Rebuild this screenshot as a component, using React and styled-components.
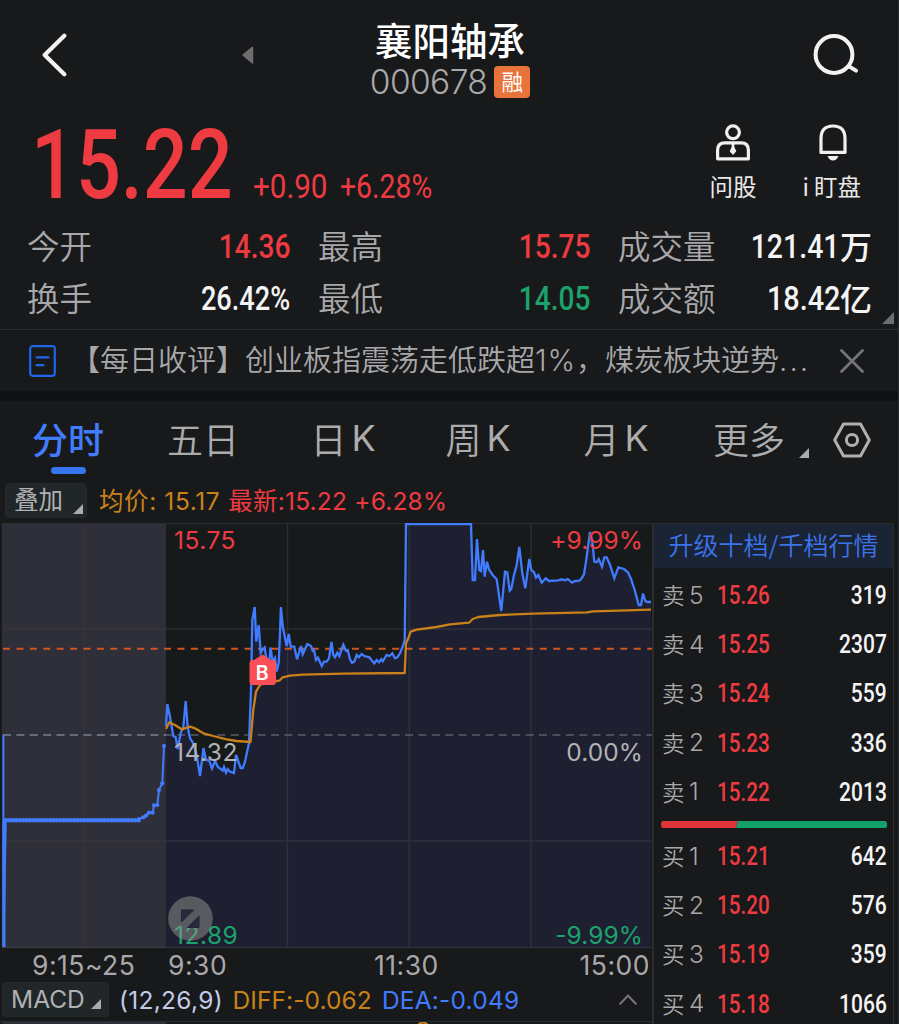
import React from "react";
import styled, { createGlobalStyle } from "styled-components";

const c = {
  bg: "#18191b",
  red: "#ee3b41",
  green: "#1ca36c",
  blue: "#417cff",
  orange: "#c98219",
  label: "#a8a8aa",
  white: "#f4f4f5",
  line: "#2b2c2f",
};

const sans = `Inter, "Noto Sans CJK SC", sans-serif`;
const cjk = `"Noto Sans CJK SC", sans-serif`;

const GlobalStyle = createGlobalStyle`
  body { margin: 0; background: ${c.bg}; }
  * { box-sizing: border-box; }
`;

const Screen = styled.div`
  width: 899px;
  height: 1024px;
  overflow: hidden;
  display: flex;
  flex-direction: column;
  background: ${c.bg};
  border-right: 1px solid #2a2b2e;
  color: ${c.white};
  font-family: ${sans};
  white-space: nowrap;
`;

const Header = styled.header`
  height: 112px;
  flex: none;
  display: grid;
  grid-template-columns: 370px 160px 1fr;
`;

const HeaderLeft = styled.div`
  display: flex;
  justify-content: space-between;
  padding: 33px 116px 0 41px;
`;

const HeaderRight = styled.div`
  display: flex;
  justify-content: flex-end;
  padding: 33px 39px 0 0;
`;

const TitleBlock = styled.div`
  display: flex;
  flex-direction: column;
  align-items: center;
  padding-top: 18px;
`;

const StockName = styled.h1`
  margin: 0;
  font: 500 37.5px/41px ${cjk};
  color: #fff;
`;

const CodeRow = styled.div`
  display: flex;
  align-items: center;
  gap: 7px;
  height: 46px;
`;

const Code = styled.span`
  font-size: 33.5px;
  line-height: 36px;
  font-weight: 320;
  letter-spacing: -0.6px;
  color: #a9a9ab;
`;

const MarginTag = styled.span`
  width: 36px;
  height: 32px;
  border-radius: 4px;
  background: #e9743b;
  color: #fff;
  font: 400 21.5px/29px ${cjk};
  text-align: center;
`;

const Quote = styled.section`
  height: 109px;
  flex: none;
  display: flex;
  justify-content: space-between;
  padding: 0 37px 0 31px;
`;

const PriceGroup = styled.div`
  display: flex;
  align-items: baseline;
  height: 109px;
  line-height: 106px;
`;

const Num = styled.span`
  display: inline-block;
  font-family: Roboto, sans-serif;
  font-size: ${(p) => p.$size}px;
  font-weight: ${(p) => p.$weight || 500};
  color: ${(p) => p.$color || c.white};
  transform: scaleX(${(p) => p.$stretch || 0.84});
  transform-origin: ${(p) => p.$origin || "left"} center;
`;

const PriceSlot = styled.div`
  width: ${(p) => p.$w}px;
`;

const ChangeGroup = styled.div`
  display: flex;
  padding-top: 1px;
  line-height: 109px;
`;

const Actions = styled.div`
  display: flex;
  gap: 46px;
  padding-top: 11px;
`;

const Action = styled.div`
  display: flex;
  flex-direction: column;
  align-items: center;
  gap: 8px;
  font: 400 23.5px/34px ${cjk};
  color: #e8e8e9;
`;

const BellIcon = styled.svg`
  margin-left: 3px;
`;

const WatchLabel = styled.span`
  display: flex;
  gap: 5px;
`;

const Stats = styled.section`
  position: relative;
  height: 109px;
  flex: none;
  display: grid;
  grid-template-columns: 263px 272px 254px;
  grid-template-rows: 51.5px 51.5px;
  column-gap: 28px;
  padding-left: 27px;
  border-bottom: 1px solid ${c.line};
`;

const Stat = styled.div`
  display: flex;
  justify-content: space-between;
  align-items: center;
`;

const StatLabel = styled.span`
  margin-top: -3px;
  font: 350 32.5px/48px ${cjk};
  color: ${c.label};
`;

const StatValue = styled.span`
  display: flex;
  align-items: center;
`;

const Unit = styled.span`
  margin-top: -3px;
  font: 500 32px/48px ${cjk};
  color: ${c.white};
`;

const StatsCorner = styled.svg`
  position: absolute;
  right: 4px;
  bottom: 5px;
`;

const News = styled.section`
  height: 61px;
  flex: none;
  display: flex;
  align-items: center;
  padding: 0 34px 0 29px;
`;

const NewsText = styled.span`
  width: 741px;
  margin: -3px 28px 0 15px;
  font: 350 29px/48px ${cjk};
  color: ${c.label};
`;

const NewsLatin = styled.span`
  font-family: Inter, sans-serif;
  font-size: 29.5px;
  font-weight: 350;
  letter-spacing: ${(p) => p.$track || 0}px;
`;

const Band = styled.div`
  height: 10px;
  flex: none;
  background: #0f1214;
`;

const Tabs = styled.nav`
  height: 80px;
  flex: none;
  display: grid;
  grid-template-columns: 136px 134px 146px 124px 152px 1fr;
`;

const Tab = styled.div`
  display: flex;
  flex-direction: column;
  align-items: center;
  padding-top: 9px;
  font: ${(p) => (p.$active ? 500 : 350)} 36px/57px ${cjk};
  color: ${(p) => (p.$active ? c.blue : "#acacad")};
`;

const TabLabel = styled.span`
  display: flex;
  gap: 5px;
`;

const Latin = styled.span`
  font-family: Inter, sans-serif;
  font-weight: 400;
`;

const Underline = styled.i`
  width: 35px;
  height: 7px;
  border-radius: 4px;
  background: #3676f0;
`;

const MoreTab = styled.div`
  display: flex;
  align-items: flex-start;
  padding: 9px 0 0 21px;
  font: 350 36px/57px ${cjk};
  color: #acacad;
`;

const MoreArrow = styled.svg`
  margin: 38px 24px 0 14px;
`;

const HexIcon = styled.svg`
  margin-top: 12px;
`;

const Legend = styled.div`
  height: 42px;
  flex: none;
  display: flex;
  align-items: center;
  padding: 0 0 3px 5px;
  font-size: 24.5px;
  line-height: 34px;
`;

const Chip = styled.button`
  display: flex;
  align-items: center;
  justify-content: space-between;
  width: ${(p) => p.$w}px;
  height: 35px;
  margin: 0;
  padding: 0 ${(p) => p.$pr}px 0 8px;
  border: 1px solid #25292b;
  border-radius: 4px;
  background: #212628;
  color: #b0b1b2;
  font: 380 24.5px/33px ${sans};
`;

const ChipArrow = styled.svg`
  align-self: flex-end;
  margin-bottom: ${(p) => p.$mb}px;
`;

const LegendText = styled.span`
  margin-left: ${(p) => p.$ml}px;
  color: ${(p) => p.$color};
  letter-spacing: ${(p) => p.$track || 0}px;
  font-weight: 390;
`;

const Main = styled.main`
  flex: 1;
  min-height: 0;
  display: grid;
  grid-template-columns: 652px 242px;
`;

const ChartColumn = styled.div`
  display: flex;
  flex-direction: column;
`;

const ChartBox = styled.div`
  position: relative;
  height: 426px;
  flex: none;
`;

const Plot = styled.svg`
  display: block;
`;

const ChartLabel = styled.span`
  position: absolute;
  ${(p) => (p.$right ? "right: 9px" : "left: 174px")};
  top: ${(p) => p.$top}px;
  font-size: 24.5px;
  line-height: 30px;
  font-weight: 390;
  letter-spacing: ${(p) => (p.$right ? 0.1 : 0.5)}px;
  color: ${(p) => p.$color};
`;

const ExpandButton = styled.svg`
  position: absolute;
  left: 168px;
  top: 373px;
`;

const Axis = styled.div`
  display: grid;
  grid-template-columns: 168px 206px 1fr auto;
  height: 32px;
  padding-right: 2px;
  font-size: 26.5px;
  font-weight: 390;
  letter-spacing: 0.5px;
  line-height: 32px;
  color: ${c.label};
`;

const AxisFirst = styled.span`
  padding-left: 32px;
`;

const MacdRow = styled.div`
  display: flex;
  align-items: center;
  height: 41px;
  flex: none;
  padding: 0 15px 3px 2px;
  font-size: 24.5px;
  border-bottom: 1px solid ${c.line};
`;

const Collapse = styled.svg`
  margin-left: auto;
`;

const Book = styled.aside`
  border-left: 2px solid #2b2c2f;
  border-right: 1.5px solid #2b2c2f;
  border-top: 1px solid #2b2c2f;
`;

const Upgrade = styled.div`
  height: 44px;
  margin-bottom: 3px;
  background: #1b2435;
  color: #3b74ec;
  font: 350 25px/41px ${cjk};
  text-align: center;
`;

const Level = styled.div`
  display: grid;
  grid-template-columns: 27px 28px 1fr auto;
  align-items: center;
  height: 49.2px;
  padding: 0 6px 0 8px;
`;

const Side = styled.span`
  margin-top: -3px;
  font: 350 22.5px/40px ${cjk};
  color: ${c.label};
`;

const Rank = styled.span`
  margin-top: -2px;
  font-size: 24.5px;
  font-weight: 360;
  color: ${c.label};
`;

const Ratio = styled.svg`
  display: block;
  margin: 4px 0 4px 7px;
`;

const Corner = ({ mb }) => (
  <ChipArrow $mb={mb} width="10" height="10" viewBox="0 0 10 10">
    <path d="M10 0V10H0Z" fill="#a9abac" />
  </ChipArrow>
);

const sells = [
  [5, "15.26", "319"],
  [4, "15.25", "2307"],
  [3, "15.24", "559"],
  [2, "15.23", "336"],
  [1, "15.22", "2013"],
];
const buys = [
  [1, "15.21", "642"],
  [2, "15.20", "576"],
  [3, "15.19", "359"],
  [4, "15.18", "1066"],
];

const LevelRow = ({ side, row }) => (
  <Level>
    <Side>{side}</Side>
    <Rank>{row[0]}</Rank>
    <Num $size={25} $color={c.red} $stretch={0.825}>{row[1]}</Num>
    <Num $size={25} $origin="right" $stretch={0.84}>{row[2]}</Num>
  </Level>
);

const auction =
  "M3.4 735V947L5.8 820H138L139 819 143.3 817.3 146 815.7 149 812.7 152.7 812.7 154 805.3 157.3 805 159 790 162.3 783.3 164 746";
const auctionSteps = [
  [139, 819], [143.3, 817.3], [146, 815.7], [149, 812.7], [152.7, 812.7],
  [154, 805.3], [157.3, 805], [159, 790], [162.3, 783.3], [164, 746],
];

const priceLine =
  "166 726 167.3 704 170 717 173.3 736 175.7 737 177.7 749 180.7 733 183.3 727 185.7 701 187.7 727 190 738 193 743 196.7 755 200 776 203.5 748 206 760 209 760 212 768.5 215 761 218 767 222.7 770.7 224 767 226 772.7 227.7 769 230 771.7 234 773 236 755 240.7 768 242.7 768 245 761.7 249 743 251 690 252.3 620 254.7 607 256.3 641.7 258.7 625 260.7 653 262.7 649.5 264.7 647.5 266.7 662 268.7 667 270.5 647.5 272.7 662 275 658 276.7 671.5 278.7 663 280 633 280.9 607 282.7 626 286.7 646 288.7 634 290.7 646.7 294.3 646.7 297 659.3 301 646 302.7 654.3 307.3 644 311 646 312.7 650.7 314 650 316 660 318 657.7 321.7 666 324 661.7 326.7 661.7 329 658.3 331.5 642 333.3 655 335 657.3 337.3 652.7 339.3 656 343.3 644.7 346 650.7 347.7 650 350 659.3 352 662.7 354.3 661.7 356.7 655 358.7 657.3 361.7 654 364.3 656 366.7 656.7 369.3 657.3 372 660.7 374.3 663.3 376.7 660 379 662.3 381.3 659.3 382.7 661.3 386.7 655 389.3 656 392.3 653.3 395 658.3 397.3 657.3 400 653.3 403.3 645 404.7 640 406 524 471 524 472.7 580 475 580 477 539 479.3 570 481 571 483 550 484.7 576.7 487 561.7 489.3 570 492.7 575 496.7 579.3 501.3 611 505 571.7 507.3 572.3 509.7 590.7 511.3 589 514 575 516.7 565 519.3 547 522.3 573.3 525.3 588.3 529.3 559 531.3 570 534 572.3 536 577.7 538.3 575 541.7 582.7 545.7 578.3 549 581 558.3 580.3 561.7 579.3 565 580.3 567.7 579 572 582.7 575 581 579.3 580.7 581.7 578.3 584 574.3 586 561.7 590 532 592.7 545 594.3 561.7 596.7 562.3 598.7 559 602 566.7 604.3 557.3 606.7 557.3 610 565 614.3 578.3 618.3 567.3 624 569 628 572.3 631 579 634.7 590 638.7 605 641 605 643 593.5 645.3 601 647.3 602 651 602";

const averageLine =
  "166 729 169.3 722.3 175 725 181.7 729.3 190 726.7 195 728.3 203.3 733.3 213.3 736 226.7 739.3 236.7 741 250.5 742 253.3 710 256 691.7 260 685 268 682 276 681 279.3 680.7 282.7 677.3 290 675.7 303.3 674.7 343 673.7 404.7 673 406 643.3 408.3 638.3 410.7 631.7 416.7 629.7 436.7 627 450 624.3 469 622.7 472.7 619 478.3 617 500 615 533.3 613.7 586.7 612.3 593.3 611.3 651 609.7";

const IntradayChart = () => (
  <Plot width="652" height="426" viewBox="0 523 652 426" fill="none">
    <rect x="2.5" y="524" width="649" height="424" fill="#171a1a" />
    <rect x="2.5" y="524" width="163.5" height="424" fill="#2f2f39" />
    <polygon points={`166 948 ${priceLine} 651 948`} fill="#1e1f30" />
    <path d="M2 523.5H652M287.5 524V948M409.3 524V948M531 524V948M166 629H652M166 841H652M2 947.5H652" stroke="#5b5b60" strokeOpacity=".3" strokeWidth="1.5" />
    <path d="M84 524V948M2 629H166M2 841H166M2.5 524V948" stroke="#3a3a3a" strokeOpacity=".6" strokeWidth="1.3" />
    <path d="M3 735H166" stroke="#777b88" strokeOpacity=".8" strokeWidth="1.8" strokeDasharray="8 5.4" />
    <path d="M163.8 735H652" stroke="#777b88" strokeOpacity=".5" strokeWidth="1.8" strokeDasharray="8 5.4" />
    <path d="M3 648.8H652" stroke="#cf5522" strokeWidth="2" strokeDasharray="7 6.42" />
    <path d={auction} stroke={c.blue} strokeWidth="2" />
    <path d="M4 822V947" stroke={c.blue} strokeWidth="3" />
    <path d="M6 820.2H139" stroke={c.blue} strokeWidth="4.4" strokeLinecap="round" strokeDasharray="0.1 3.3" />
    {auctionSteps.map(([x, y]) => (
      <circle key={x} cx={x} cy={y} r="2.1" fill={c.blue} />
    ))}
    <polyline points={priceLine} stroke={c.blue} strokeWidth="2.3" strokeLinejoin="miter" strokeMiterlimit="4" />
    <polyline points={averageLine} stroke={c.orange} strokeWidth="2.3" strokeLinejoin="round" />
    <path d="M262.5 654.5L271 660H272.5Q276 660 276 663.5V681.5Q276 685 272.5 685H253Q249.5 685 249.5 681.5V663.5Q249.5 660 253 660H254Z" fill="#fb4f58" />
    <text x="262.3" y="680.2" fill="#fff" fontFamily="Inter, sans-serif" fontWeight="600" fontSize="19.5" textAnchor="middle">B</text>
  </Plot>
);

export default function App() {
  return (
    <Screen>
      <GlobalStyle />
      <Header>
        <HeaderLeft>
          <svg width="27" height="44" viewBox="0 0 27 44" fill="none" stroke="#f2f2f2" strokeWidth="4.2" strokeLinecap="round" strokeLinejoin="round">
            <path d="M23.3 2.7L3.7 22L23.3 41.3" />
          </svg>
          <svg width="12" height="44" viewBox="0 0 12 44">
            <path d="M1 22L10.5 14.3V30Z" fill="#6e6e70" stroke="#6e6e70" strokeWidth="1.5" strokeLinejoin="round" />
          </svg>
        </HeaderLeft>
        <TitleBlock>
          <StockName>襄阳轴承</StockName>
          <CodeRow>
            <Code>000678</Code>
            <MarginTag>融</MarginTag>
          </CodeRow>
        </TitleBlock>
        <HeaderRight>
          <svg width="46" height="44" viewBox="0 0 46 44" fill="none" stroke="#f2f2f2" strokeWidth="4" strokeLinecap="round">
            <circle cx="21" cy="21.5" r="18.4" />
            <path d="M36.5 33.6L43 37.6" />
          </svg>
        </HeaderRight>
      </Header>

      <Quote>
        <PriceGroup>
          <PriceSlot $w={222}>
            <Num $size={97} $color={c.red} $weight={500} $stretch={0.815}>15.22</Num>
          </PriceSlot>
          <ChangeGroup>
            <PriceSlot $w={87}>
              <Num $size={34} $weight={450} $color={c.red} $stretch={0.87}>+0.90</Num>
            </PriceSlot>
            <Num $size={34} $weight={450} $color={c.red} $stretch={0.835}>+6.28%</Num>
          </ChangeGroup>
        </PriceGroup>
        <Actions>
          <Action>
            <svg width="36" height="38" viewBox="0 0 36 38" fill="none" stroke="#f0f0f0" strokeWidth="3.2">
              <circle cx="18" cy="9.3" r="6.4" />
              <path d="M2.6 35.8V27Q2.6 19.8 9.8 19.8H26.2Q33.4 19.8 33.4 27V35.8Z" strokeLinejoin="round" />
              <path d="M16.2 20H19.8L19.2 23.4L21.3 28.2L18 32L14.7 28.2L16.8 23.4Z" fill="#f0f0f0" stroke="none" />
            </svg>
            问股
          </Action>
          <Action>
            <BellIcon width="30" height="38" viewBox="0 0 30 38" fill="none" stroke="#f0f0f0" strokeWidth="3.2">
              <path d="M3 29.4V15.5Q3 3 15 3Q27 3 27 15.5V29.4Z" strokeLinejoin="round" />
              <path d="M9.5 33H20.5Q18.5 37.6 15 37.6Q11.5 37.6 9.5 33Z" fill="#f0f0f0" stroke="none" />
            </BellIcon>
            <WatchLabel>
              <span>i</span>
              <span>盯盘</span>
            </WatchLabel>
          </Action>
        </Actions>
      </Quote>

      <Stats>
        <Stat>
          <StatLabel>今开</StatLabel>
          <Num $size={33.5} $color={c.red} $origin="right">14.36</Num>
        </Stat>
        <Stat>
          <StatLabel>最高</StatLabel>
          <Num $size={33.5} $color={c.red} $origin="right">15.75</Num>
        </Stat>
        <Stat>
          <StatLabel>成交量</StatLabel>
          <StatValue>
            <Num $size={33.5} $origin="right" $stretch={0.85}>121.41</Num>
            <Unit>万</Unit>
          </StatValue>
        </Stat>
        <Stat>
          <StatLabel>换手</StatLabel>
          <Num $size={33.5} $origin="right" $stretch={0.81}>26.42%</Num>
        </Stat>
        <Stat>
          <StatLabel>最低</StatLabel>
          <Num $size={33.5} $color={c.green} $origin="right">14.05</Num>
        </Stat>
        <Stat>
          <StatLabel>成交额</StatLabel>
          <StatValue>
            <Num $size={33.5} $origin="right" $stretch={0.86}>18.42</Num>
            <Unit>亿</Unit>
          </StatValue>
        </Stat>
        <StatsCorner width="12" height="12" viewBox="0 0 12 12">
          <path d="M12 0V12H0Z" fill="#6d6e70" />
        </StatsCorner>
      </Stats>

      <News>
        <svg width="27" height="32" viewBox="0 0 27 32" fill="none" stroke="#1f66ea" strokeWidth="2.2" strokeLinecap="round">
          <rect x="1.2" y="1.2" width="24.6" height="29.6" rx="2.5" />
          <path d="M7.5 12.3H19.5M7.5 20.2H14.5" />
        </svg>
        <NewsText>
          【每日收评】创业板指震荡走低跌超<NewsLatin $track={0.9}>1%</NewsLatin>，煤炭板块逆势<NewsLatin $track={2}>...</NewsLatin>
        </NewsText>
        <svg width="24" height="24" viewBox="0 0 24 24" stroke="#747578" strokeWidth="2.8" strokeLinecap="round">
          <path d="M1.5 1.5L22.5 22.5M22.5 1.5L1.5 22.5" />
        </svg>
      </News>
      <Band />

      <Tabs>
        <Tab $active>
          分时
          <Underline />
        </Tab>
        <Tab>五日</Tab>
        <Tab>
          <TabLabel>日<Latin>K</Latin></TabLabel>
        </Tab>
        <Tab>
          <TabLabel>周<Latin>K</Latin></TabLabel>
        </Tab>
        <Tab>
          <TabLabel>月<Latin>K</Latin></TabLabel>
        </Tab>
        <MoreTab>
          更多
          <MoreArrow width="10" height="10" viewBox="0 0 10 10">
            <path d="M10 0V10H0Z" fill="#a9abac" />
          </MoreArrow>
          <HexIcon width="38" height="36" viewBox="0 0 38 36" fill="none" stroke="#b0b0b1" strokeWidth="3">
            <path d="M10.5 2H27.5L36.3 18L27.5 34H10.5L1.7 18Z" strokeLinejoin="round" />
            <circle cx="19" cy="18" r="5.6" />
          </HexIcon>
        </MoreTab>
      </Tabs>

      <Legend>
        <Chip $w={82} $pr={3}>
          叠加
          <Corner mb={3} />
        </Chip>
        <LegendText $ml={12} $color={c.orange} $track={0.6}>均价: 15.17</LegendText>
        <LegendText $ml={8} $color={c.red} $track={0.2}>最新:15.22 +6.28%</LegendText>
      </Legend>

      <Main>
        <ChartColumn>
          <ChartBox>
            <IntradayChart />
            <ChartLabel $top={2} $color={c.red}>15.75</ChartLabel>
            <ChartLabel $top={214} $color="#b2b2b4">14.32</ChartLabel>
            <ChartLabel $top={397} $color={c.green}>12.89</ChartLabel>
            <ChartLabel $right $top={2} $color={c.red}>+9.99%</ChartLabel>
            <ChartLabel $right $top={214} $color="#b2b2b4">0.00%</ChartLabel>
            <ChartLabel $right $top={397} $color={c.green}>-9.99%</ChartLabel>
            <ExpandButton width="45" height="45" viewBox="0 0 45 45">
              <circle cx="22.5" cy="22.5" r="22.3" fill="#9a9a94" fillOpacity=".48" />
              <path d="M13.5 14H25.5L13.5 26ZM31 20V31.5H19.5Z" fill="#22233a" fillOpacity=".9" stroke="#22233a" strokeWidth="1" strokeLinejoin="round" />
            </ExpandButton>
          </ChartBox>
          <Axis>
            <AxisFirst>9:15~25</AxisFirst>
            <span>9:30</span>
            <span>11:30</span>
            <span>15:00</span>
          </Axis>
          <MacdRow>
            <Chip $w={107} $pr={7}>
              MACD
              <Corner mb={7} />
            </Chip>
            <LegendText $ml={10} $color="#c3cbe6" $track={0.3}>(12,26,9)</LegendText>
            <LegendText $ml={9.5} $color={c.orange} $track={0.1}>DIFF:-0.062</LegendText>
            <LegendText $ml={10} $color={c.blue} $track={0.2}>DEA:-0.049</LegendText>
            <Collapse width="18" height="11" viewBox="0 0 18 11" fill="none" stroke="#77787b" strokeWidth="2" strokeLinecap="round">
              <path d="M1.2 9.8L9 1.6L16.8 9.8" />
            </Collapse>
          </MacdRow>
          <Plot width="652" height="3" viewBox="0 0 652 3">
            <rect x="2.5" width="163.5" height="3" fill="#2f2f39" />
            <path d="M418 3Q423 -2 428 3" fill="none" stroke={c.orange} strokeWidth="2" />
          </Plot>
        </ChartColumn>
        <Book>
          <Upgrade>升级十档/千档行情</Upgrade>
          {sells.map((row) => (
            <LevelRow key={row[0]} side="卖" row={row} />
          ))}
          <Ratio width="227" height="7" viewBox="0 0 227 7">
            <path d="M2.5 0H77L75 7H2.5Q0 7 0 4.5V2.5Q0 0 2.5 0Z" fill="#de3338" />
            <path d="M77 0H223.5Q226 0 226 2.5V4.5Q226 7 223.5 7H75Z" fill="#14a06b" />
          </Ratio>
          {buys.map((row) => (
            <LevelRow key={row[0]} side="买" row={row} />
          ))}
        </Book>
      </Main>
    </Screen>
  );
}
